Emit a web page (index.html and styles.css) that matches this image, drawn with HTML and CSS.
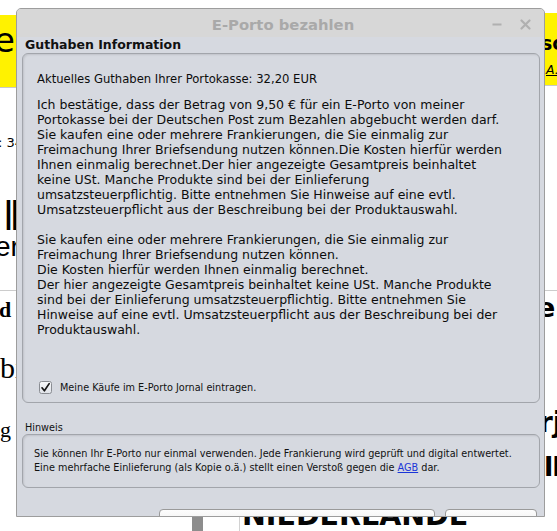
FILE: index.html
```html
<!DOCTYPE html>
<html lang="de">
<head>
<meta charset="utf-8">
<title>E-Porto bezahlen</title>
<link rel="stylesheet" href="styles.css">
</head>
<body>
<div class="screen">
  <div class="page">
    <div class="col col-left">
      <div class="ad-l"><span>Briefmarke</span></div>
      <div class="frag f-num">: 34</div>
      <div class="frag f-ll">ll</div>
      <div class="frag f-er">er</div>
      <div class="rule rule-l"></div>
      <div class="frag f-d">d</div>
      <div class="frag f-b">bi</div>
      <div class="frag f-g">g</div>
    </div>
    <div class="col col-mid">
      <div class="foot-row">
        <div class="foot-bar"></div>
        <div class="foot-line"></div>
        <div class="foot-title">NIEDERLANDE</div>
      </div>
    </div>
    <div class="col col-right">
      <div class="ad-r">
        <div class="ad-r-so">so</div>
        <div class="ad-r-a">A.</div>
      </div>
      <div class="rule rule-r"></div>
      <div class="frag rf-e">e</div>
      <div class="frag rf-rj">rj</div>
      <div class="frag rf-ll">ll</div>
    </div>
  </div>

  <div class="dialog">
    <div class="titlebar">
      <span class="title">E-Porto bezahlen</span>
      <div class="wm">
        <svg class="wm-icon" width="10" height="11" viewBox="0 0 10 11"><path d="M0.5 5.5H9.5" stroke="#b0b0b0" stroke-width="2"/></svg>
        <svg class="wm-icon" width="11" height="11" viewBox="0 0 11 11"><path d="M1.5 1.5L9.5 9.5M9.5 1.5L1.5 9.5" stroke="#b0b0b0" stroke-width="2.2" stroke-linecap="round"/></svg>
      </div>
    </div>
    <div class="dlg-body">
      <div class="group-label">Guthaben Information</div>
      <div class="groupbox">
        <p class="balance">Aktuelles Guthaben Ihrer Portokasse: 32,20 EUR</p>
        <p class="para para-1">Ich bestätige, dass der Betrag von 9,50 € für ein E-Porto von meiner<br>Portokasse bei der Deutschen Post zum Bezahlen abgebucht werden darf.<br>Sie kaufen eine oder mehrere Frankierungen, die Sie einmalig zur<br>Freimachung Ihrer Briefsendung nutzen können.Die Kosten hierfür werden<br>Ihnen einmalig berechnet.Der hier angezeigte Gesamtpreis beinhaltet<br>keine USt. Manche Produkte sind bei der Einlieferung<br>umsatzsteuerpflichtig. Bitte entnehmen Sie Hinweise auf eine evtl.<br>Umsatzsteuerpflicht aus der Beschreibung bei der Produktauswahl.</p>
        <p class="para para-2">Sie kaufen eine oder mehrere Frankierungen, die Sie einmalig zur<br>Freimachung Ihrer Briefsendung nutzen können.<br>Die Kosten hierfür werden Ihnen einmalig berechnet.<br>Der hier angezeigte Gesamtpreis beinhaltet keine USt. Manche Produkte<br>sind bei der Einlieferung umsatzsteuerpflichtig. Bitte entnehmen Sie<br>Hinweise auf eine evtl. Umsatzsteuerpflicht aus der Beschreibung bei der<br>Produktauswahl.</p>
        <label class="check-row">
          <svg class="checkbox" width="13" height="13" viewBox="0 0 13 13">
            <defs><linearGradient id="cbg" x1="0" y1="0" x2="0" y2="1"><stop offset="0" stop-color="#f7f8fa"/><stop offset="1" stop-color="#dfe2e8"/></linearGradient></defs>
            <rect x="0.5" y="0.5" width="12" height="12" rx="2" fill="url(#cbg)" stroke="#8a8d93"/>
            <path d="M3 6.8L5.4 9.8L10.2 2.6" fill="none" stroke="#161616" stroke-width="1.7" stroke-linecap="round" stroke-linejoin="round"/>
          </svg>
          <span>Meine Käufe im E-Porto Jornal eintragen.</span>
        </label>
      </div>
      <div class="note-label">Hinweis</div>
      <div class="notebox">
        Sie können Ihr E-Porto nur einmal verwenden. Jede Frankierung wird geprüft und digital entwertet.<br>Eine mehrfache Einlieferung (als Kopie o.ä.) stellt einen Verstoß gegen die <a href="#" class="link">AGB</a> dar.
      </div>
      <div class="buttons">
        <button class="btn btn-pay">Zahlungspflichtig E-Porto kaufen</button>
        <button class="btn btn-cancel">Abbrechen</button>
      </div>
    </div>
  </div>
</div>
</body>
</html>
```

FILE: styles.css
```css
* { box-sizing: border-box; }
html, body { margin: 0; padding: 0; }
body { background: #ffffff; font-family: "DejaVu Sans", "Noto Sans", sans-serif; color: #000; }

.screen { position: relative; width: 557px; height: 531px; overflow: hidden; }

/* background web page */
.page { display: grid; grid-template-columns: 16px 529px 12px; height: 531px; }
.col { overflow: hidden; white-space: nowrap; min-width: 0; }
.frag { white-space: nowrap; }
.rule { height: 1px; background: #cccccc; }

.ad-l {
  margin-top: 15px; height: 73px; background: #fff200; border-bottom: 1px solid #c9c9c9;
  display: flex; justify-content: flex-end; padding: 8px 1px 0 0;
  font-family: "DejaVu Sans", sans-serif; font-size: 34px; line-height: 34px;
}
.f-num { margin-top: 47px; margin-left: -2px; font-size: 13px; line-height: 15px; }
.f-ll { margin-top: 48px; margin-left: 4px; font-family: "Liberation Sans", sans-serif; font-size: 40px; line-height: 36px; letter-spacing: -2.5px; font-weight: 300; font-stretch: condensed; }
.f-er { margin-top: 0; margin-left: -5px; font-family: "Liberation Sans", sans-serif; font-size: 28px; line-height: 26px; }
.rule-l { margin-top: 30px; }
.f-d { margin-top: 8px; margin-left: -1px; font-family: "Liberation Serif", serif; font-weight: bold; font-size: 22px; line-height: 22px; }
.f-b { margin-top: 32px; font-family: "Liberation Serif", serif; font-size: 30px; line-height: 30px; }
.f-g { margin-top: 36px; font-family: "Liberation Serif", serif; font-size: 22px; line-height: 22px; }

.foot-row { margin-top: 501px; display: flex; padding-left: 176px; height: 30px; }
.foot-bar { width: 11px; background: #8d8d8d; }
.foot-line { width: 1px; background: #d2d2d2; margin-left: 36px; }
.foot-title { padding-left: 2px; font-family: "DejaVu Sans", sans-serif; font-weight: bold; font-size: 28.5px; line-height: 30px; color: #050505; }

.ad-r {
  margin-top: 13px; height: 73px; background: #fff200; border-bottom: 1px solid #c9c9c9;
  padding-top: 19px;
}
.ad-r-so { margin-left: -4px; font-weight: bold; font-size: 19px; line-height: 22px; }
.ad-r-a { margin-top: 8px; margin-left: 1px; font-style: italic; font-size: 12.5px; line-height: 15px; text-decoration: underline; }
.rule-r { margin-top: 204px; }
.rf-e { margin-top: 3px; margin-left: -8px; font-weight: bold; font-size: 27px; line-height: 27px; }
.rf-rj { margin-top: 88px; margin-left: -6px; font-weight: bold; font-size: 28px; line-height: 28px; }
.rf-ll { margin-top: 15px; margin-left: -1px; font-weight: bold; font-size: 27px; line-height: 29px; letter-spacing: -1px; }

/* dialog window */
.dialog {
  position: absolute; left: 16px; top: 8px; width: 529px; height: 509px;
  border: 1px solid #9d9d9d; border-radius: 5px 5px 0 0;
  background: #d6d9e0; overflow: hidden;
  display: flex; flex-direction: column;
}
.titlebar {
  height: 28px; flex: none; background: #d7d7d7;
  display: grid; grid-template-columns: 1fr auto 1fr; align-items: start;
  padding-left: 5px;
}
.title { grid-column: 2; padding-top: 3px; font-weight: bold; font-size: 14.8px; line-height: 25px; color: #a9a9a9; white-space: nowrap; }
.wm { grid-column: 3; justify-self: end; display: flex; gap: 18px; padding: 10px 13px 0 0; }
.wm-icon { display: block; }

.dlg-body { flex: 1; display: flex; flex-direction: column; padding: 0 4px 0 5px; }
.group-label { font-weight: bold; font-size: 12.5px; line-height: 16px; padding-left: 3px; color: #111; }
.groupbox {
  height: 350px; flex: none;
  border: 1px solid #a2a5ab; border-radius: 6px;
  box-shadow: inset 1px 1px 2px rgba(0, 0, 0, 0.10);
  padding: 18px 14px 8px;
  display: flex; flex-direction: column;
  font-size: 12.5px; line-height: 15px; color: #0c0c0c;
}
.groupbox p { margin: 0; white-space: nowrap; }
.groupbox .balance { font-size: 11.6px; }
.groupbox .para-1 { margin-top: 10px; }
.groupbox .para-2 { margin-top: 15px; }
.check-row { margin-top: auto; display: flex; align-items: center; gap: 8px; padding-left: 2px; font-size: 9.7px; line-height: 13px; color: #111; }
.checkbox { display: block; flex: none; }

.note-label { margin-top: 19px; font-size: 9.7px; line-height: 12px; padding-left: 3px; color: #111; }
.notebox {
  height: 54px; flex: none;
  border: 1px solid #a2a5ab; border-radius: 6px;
  box-shadow: inset 1px 1px 2px rgba(0, 0, 0, 0.10);
  padding: 12px 11px;
  font-size: 9.7px; line-height: 14px; color: #111; white-space: nowrap;
}
.link { color: #1a35d8; text-decoration: underline; }

.buttons { margin-top: 21px; display: flex; justify-content: flex-end; gap: 10px; padding-right: 3px; }
.btn {
  height: 26px; border: 1px solid #9a9a9a; border-radius: 4px;
  background: linear-gradient(#fdfdfd, #e6e6e6);
  font-family: "DejaVu Sans", sans-serif; font-size: 12.5px; line-height: 15px; color: #111;
  padding: 2px 0 0; text-align: center; white-space: nowrap;
}
.btn-pay { width: 276px; }
.btn-cancel { width: 92px; }
```
